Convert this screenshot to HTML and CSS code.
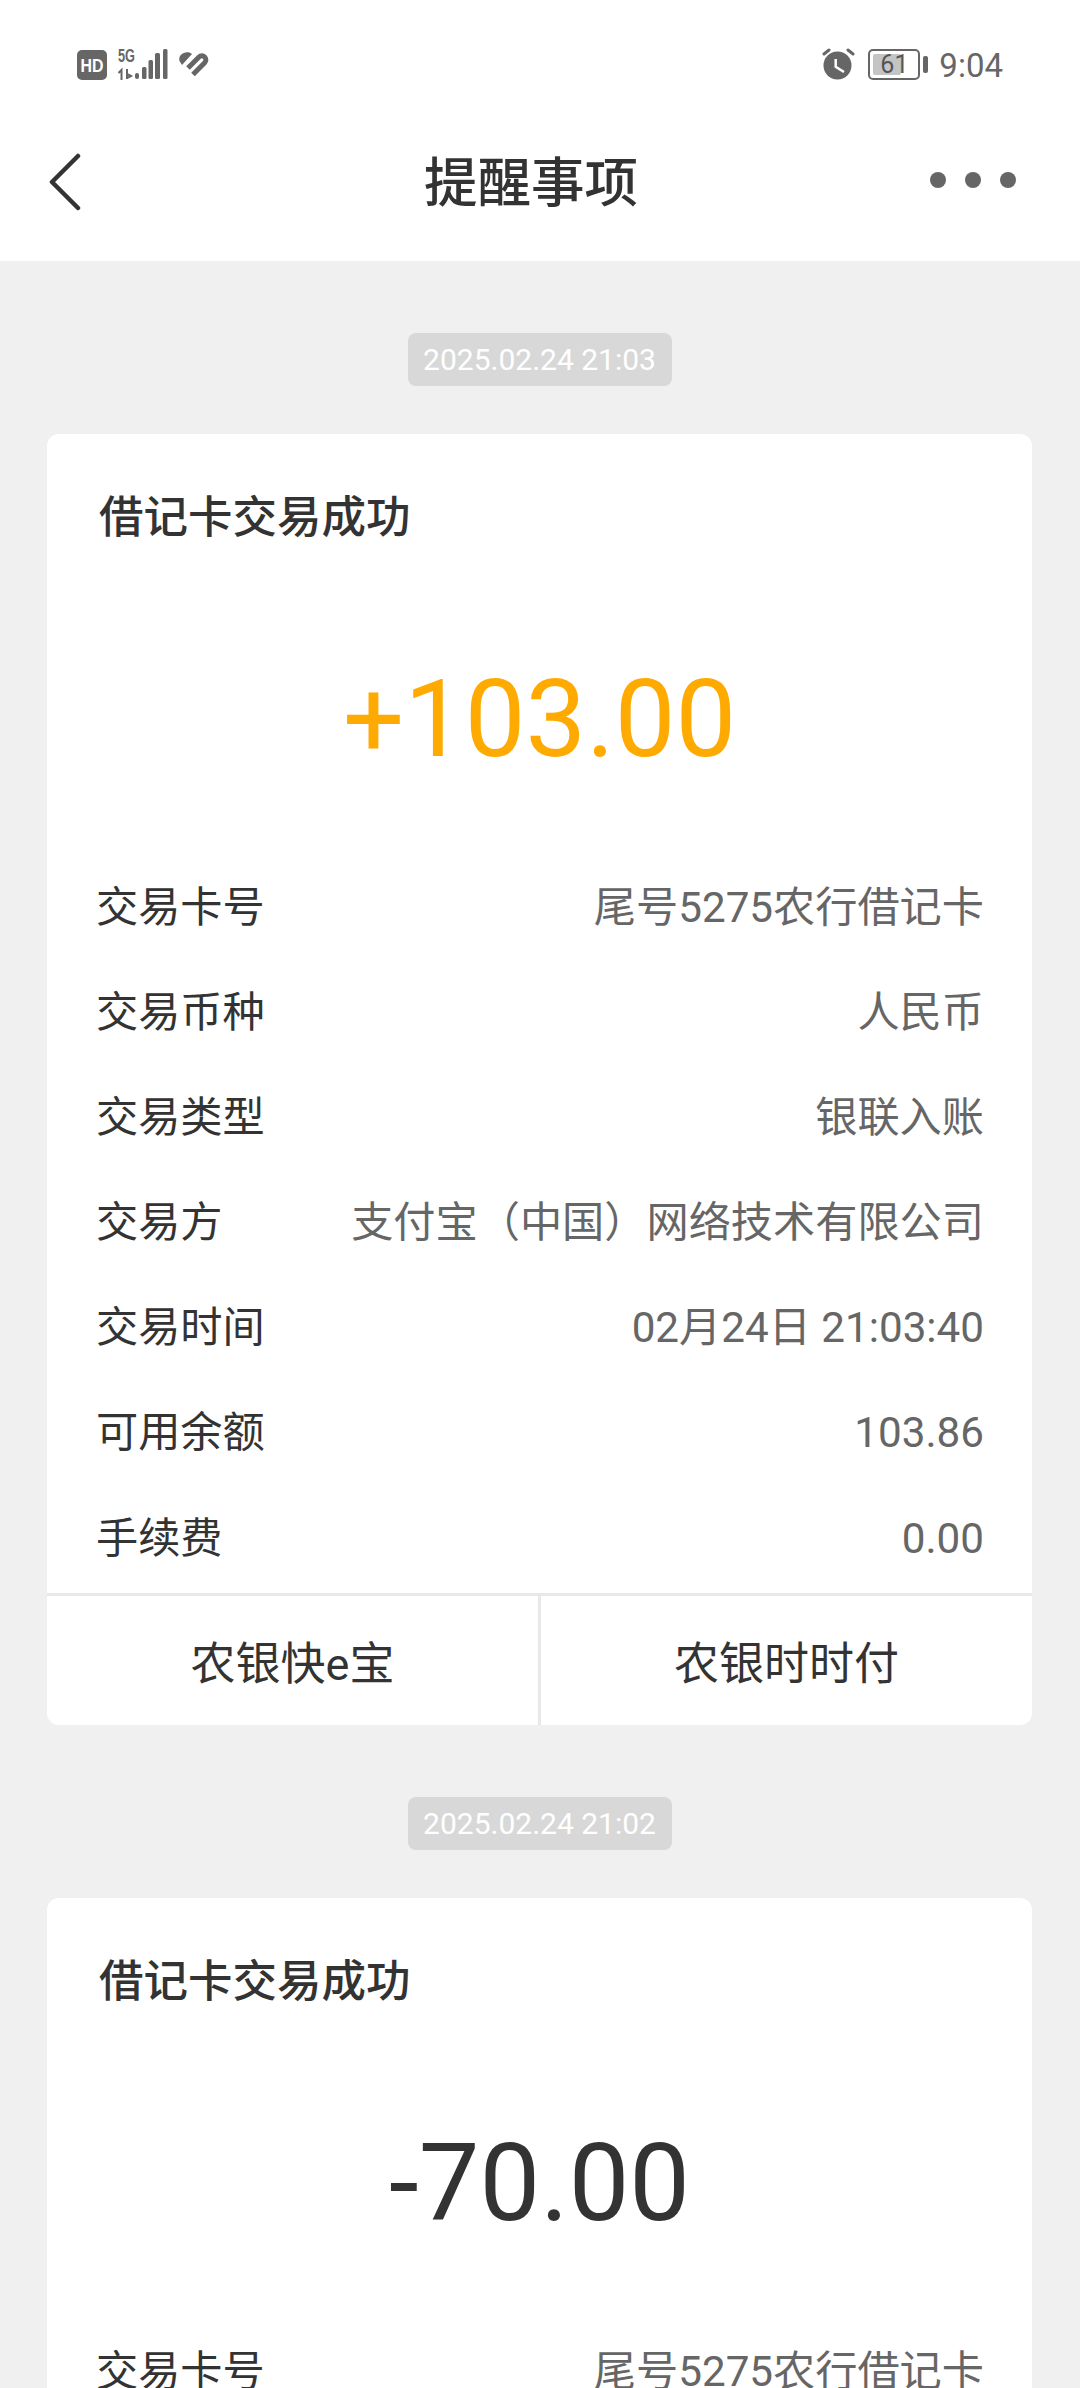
FILE: index.html
```html
<!DOCTYPE html>
<html lang="zh-CN">
    <head>
        <meta charset="UTF-8">
        <title>提醒事项</title>
        <link rel="stylesheet" href="styles.css">
    </head>
    <body>
        <div class="top">
            <div class="status">
                <div class="status-left">
                    <svg width="30" height="30" viewBox="0 0 30 30"><rect width="30" height="30" rx="5" fill="#666"/><text x="15" y="21.500" class="hd" textLength="23" lengthAdjust="spacingAndGlyphs">HD</text></svg>
                    <svg class="signal" width="50" height="36" viewBox="0 -4 50 36">
                        <text x="0" y="14" class="five-g" textLength="17" lengthAdjust="spacingAndGlyphs">5G</text>
                        <path d="M3.500 32V22L0.500 25M9 21V31M9 26L13 28L9 30" fill="none" stroke="#666" stroke-width="2"/>
                        <rect x="17" y="25" width="4" height="6" rx="2" fill="#666"/>
                        <rect x="24" y="19" width="4.500" height="12" rx="1.500" fill="#666"/>
                        <rect x="30.500" y="12" width="4.500" height="19" rx="1.500" fill="#666"/>
                        <rect x="37" y="5" width="5" height="26" rx="1.500" fill="#666"/>
                        <rect x="45" y="1" width="4.500" height="30" rx="1.500" fill="#666"/>
                    </svg>
                    <svg class="heart" width="30" height="25" viewBox="0 0 30 25">
                        <path d="M3 13L0.500 9C-0.500 5 2 1 7 0.500C9 0 11 0.500 13 2Z" fill="#666"/>
                        <path d="M9 16L20 5A4 4 0 0 1 25.700 10.700L14 22.500" fill="none" stroke="#666" stroke-width="5"/>
                    </svg>
                </div>
                <div class="status-right">
                    <svg width="33" height="32" viewBox="0 0 33 32">
                        <circle cx="15.500" cy="17.500" r="14" fill="#666"/>
                        <path d="M13.700 11V18.700L22 24" fill="none" stroke="#fff" stroke-width="2.500"/>
                        <path d="M2 6L7 2M31 6L26 2" stroke="#666" stroke-width="3" stroke-linecap="round"/>
                    </svg>
                    <div class="battery"><div class="battery-fill"></div><span class="battery-num">61</span></div>
                    <div class="battery-cap"></div>
                    <span class="clock">9:04</span>
                </div>
            </div>
            <div class="nav">
                <svg class="back" width="34" height="58" viewBox="0 0 34 58"><path d="M30 3L4 29L30 55" fill="none" stroke="#333" stroke-width="4.500" stroke-linecap="round" stroke-linejoin="round"/></svg>
                <h1 class="nav-title">提醒事项</h1>
                <div class="dots"><i></i><i></i><i></i></div>
            </div>
        </div>

        <div class="feed">
            <div class="chip">2025.02.24 21:03</div>
            <div class="card">
                <div class="card-title">借记卡交易成功</div>
                <div class="amount in">+103.00</div>
                <div class="rows">
                    <div class="row"><span>交易卡号</span><span class="val">尾号5275农行借记卡</span></div>
                    <div class="row"><span>交易币种</span><span class="val">人民币</span></div>
                    <div class="row"><span>交易类型</span><span class="val">银联入账</span></div>
                    <div class="row"><span>交易方</span><span class="val">支付宝（中国）网络技术有限公司</span></div>
                    <div class="row"><span>交易时间</span><span class="val">02月24日 21:03:40</span></div>
                    <div class="row"><span>可用余额</span><span class="val">103.86</span></div>
                    <div class="row"><span>手续费</span><span class="val">0.00</span></div>
                </div>
                <div class="actions">
                    <div class="action">农银快e宝</div>
                    <div class="action">农银时时付</div>
                </div>
            </div>

            <div class="chip">2025.02.24 21:02</div>
            <div class="card">
                <div class="card-title">借记卡交易成功</div>
                <div class="amount">-70.00</div>
                <div class="rows">
                    <div class="row"><span>交易卡号</span><span class="val">尾号5275农行借记卡</span></div>
                </div>
            </div>
        </div>
    </body>
</html>
```

FILE: styles.css
```css
html, body {
    margin: 0;
    height: 2388px;
    overflow: hidden;
}
body {
    font-family: "Roboto", "Noto Sans CJK SC", sans-serif;
    background-color: #f0f0f0;
    color: #333;
}
.top {
    background-color: #fff;
    height: 261px;
}
.status {
    height: 130px;
    padding: 50px 77px 0 77px;
    box-sizing: border-box;
    display: flex;
    justify-content: space-between;
}
.status-left, .status-right {
    display: flex;
    align-items: flex-start;
}
.status-left {
    gap: 11px;
}
.hd {
    font-family: "Liberation Sans", sans-serif;
    font-size: 19px;
    font-weight: bold;
    fill: #fff;
    text-anchor: middle;
}
.five-g {
    font-family: "Liberation Sans", sans-serif;
    font-size: 19px;
    font-weight: bold;
    fill: #666;
}
.signal {
    margin-top: -6px;
}
.heart {
    margin-top: 2px;
}
.status-right svg {
    margin-top: -2px;
}
.battery {
    position: relative;
    width: 52px;
    height: 31px;
    margin: -1px 0 0 13px;
    border: 2px solid #666;
    border-radius: 5px;
    box-sizing: border-box;
}
.battery-fill {
    position: absolute;
    left: 3px;
    top: 3px;
    bottom: 3px;
    width: 28px;
    background-color: #c4c4c4;
    border-radius: 2px;
}
.battery-num {
    position: absolute;
    left: 10px;
    top: 0;
    font-size: 25px;
    line-height: 27px;
    color: #555;
}
.battery-cap {
    width: 5px;
    height: 17px;
    margin: 6px 0 0 3px;
    background-color: #666;
    border-radius: 2px;
}
.clock {
    margin-left: 11px;
    font-size: 33px;
    line-height: 32px;
    color: #666;
}
.nav {
    height: 131px;
    padding: 0 64px 0 48px;
    display: flex;
    align-items: center;
    justify-content: space-between;
}
.back {
    margin-top: -27px;
}
.nav-title {
    margin: 0 0 0 50px;
    padding-bottom: 34px;
    font-size: 53.500px;
    font-weight: 500;
    color: #333;
}
.dots {
    display: flex;
    gap: 19px;
    margin-top: -32px;
}
.dots i {
    width: 16px;
    height: 16px;
    border-radius: 50%;
    background-color: #666;
}
.feed {
    display: flex;
    flex-direction: column;
    align-items: center;
    padding: 72px 48px 0 47px;
}
.chip {
    width: 264px;
    height: 53px;
    line-height: 53px;
    text-align: center;
    font-size: 30px;
    color: #fff;
    background-color: #d8d8d8;
    border-radius: 8px;
}
.card {
    align-self: stretch;
    margin: 48px 0 72px;
    background-color: #fff;
    border-radius: 12px;
    overflow: hidden;
}
.card-title {
    padding: 54px 0 0 52px;
    height: 60px;
    line-height: 60px;
    font-size: 44.500px;
    font-weight: 500;
}
.amount {
    margin-top: 106px;
    height: 130px;
    line-height: 130px;
    text-align: center;
    font-size: 108px;
}
.in {
    color: #ffaa00;
}
.rows {
    margin-top: 71px;
    padding: 0 48px 0 49px;
}
.row {
    height: 105.100px;
    line-height: 105.100px;
    display: flex;
    justify-content: space-between;
    align-items: baseline;
    font-size: 42.200px;
}
.val {
    color: #666;
}
.actions {
    display: flex;
    margin-top: 2px;
    height: 132px;
    border-top: 3px solid #e8e8e8;
    box-sizing: border-box;
}
.action {
    flex: 1;
    display: flex;
    align-items: center;
    justify-content: center;
    font-size: 45px;
}
.action + .action {
    border-left: 3px solid #e8e8e8;
}
```
